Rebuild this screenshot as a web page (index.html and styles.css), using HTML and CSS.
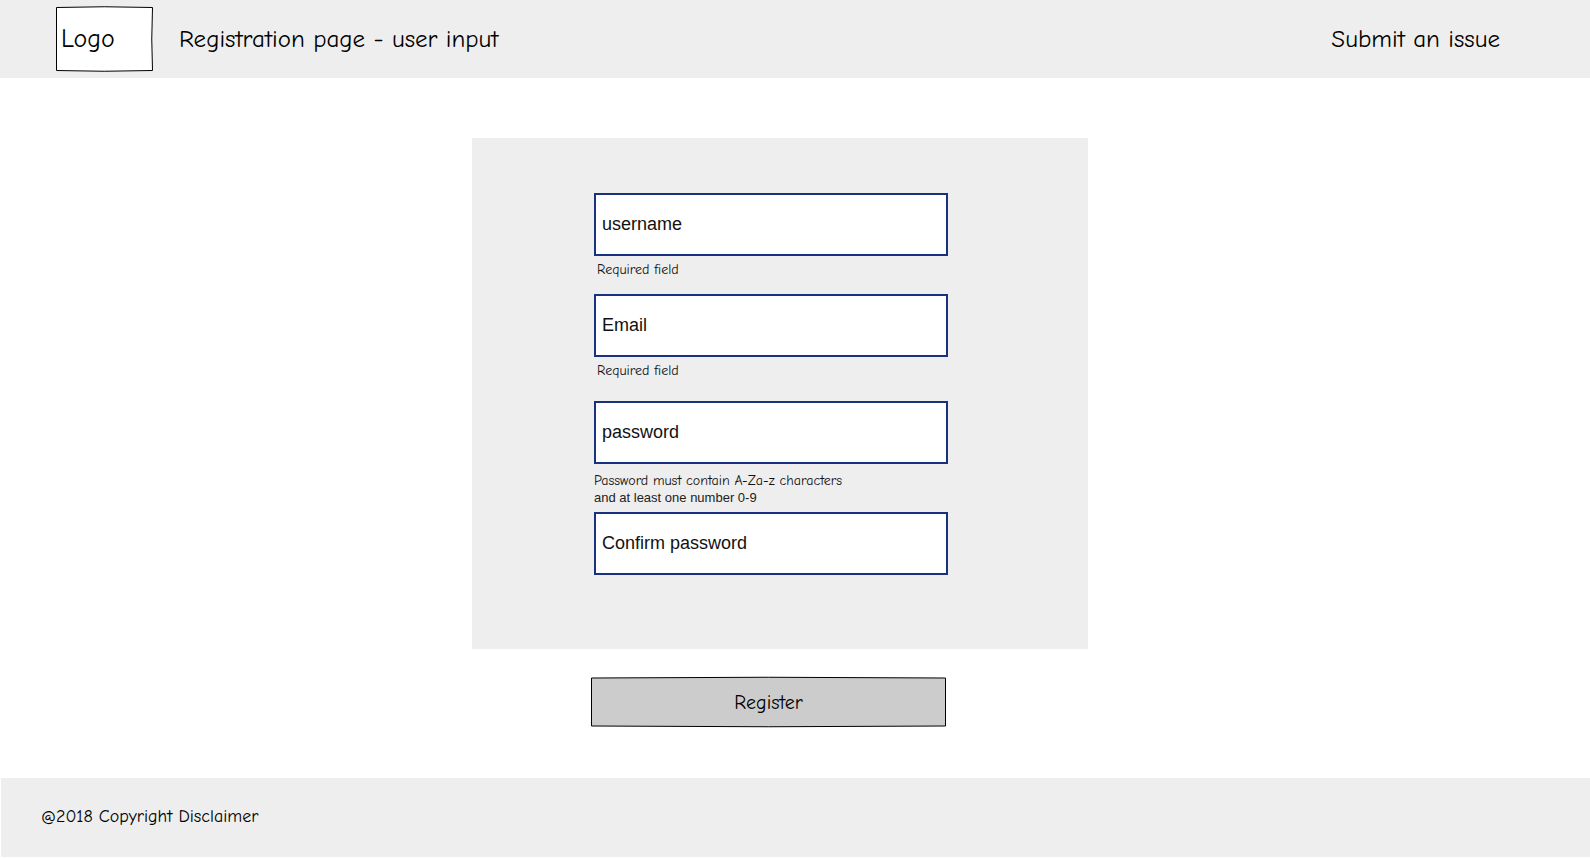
FILE: index.html
```html
<!DOCTYPE html>
<html lang="en">
<head>
<meta charset="utf-8">
<meta name="viewport" content="width=device-width, initial-scale=1">
<title>Registration page</title>
<link rel="stylesheet" href="styles.css">
</head>
<body class="page">
  <header class="header">
    <div class="logo">
      <svg class="sketch" viewBox="0 0 97 64" preserveAspectRatio="none" aria-hidden="true">
        <path class="sketch-paper" d="M.5 .5Q48-1 96.500 .5Q95 32 96.500 63.500Q48 65 .5 63.500Z"/>
      </svg>
      <span class="logo-text">Logo</span>
    </div>
    <h1 class="title">Registration page - user input</h1>
    <a class="issue-link" href="#issue">Submit an issue</a>
  </header>
  <main class="main">
    <form class="form">
      <div class="card">
        <div class="field">
          <input class="input" type="text" placeholder="username" aria-label="username" aria-describedby="username-hint">
          <p class="hint hint-inset" id="username-hint">Required field</p>
        </div>
        <div class="field">
          <input class="input" type="email" placeholder="Email" aria-label="Email" aria-describedby="email-hint">
          <p class="hint hint-inset" id="email-hint">Required field</p>
        </div>
        <div class="field">
          <input class="input" type="password" placeholder="password" aria-label="password" aria-describedby="password-hint">
          <p class="hint" id="password-hint">Password must contain A-Za-z characters<br><span class="hint-plain">and at least one number 0-9</span></p>
        </div>
        <div class="field">
          <input class="input" type="password" placeholder="Confirm password" aria-label="Confirm password">
        </div>
      </div>
      <button class="register" type="submit">
        <svg class="sketch" viewBox="0 0 355 50" preserveAspectRatio="none" aria-hidden="true">
          <path class="sketch-grey" d="M.5 1Q177-.5 354.500 1V49Q177 50.500 .5 49Z"/>
        </svg>
        <span class="register-text">Register</span>
      </button>
    </form>
  </main>
  <footer class="footer">@2018 Copyright Disclaimer</footer>
</body>
</html>
```
FILE: styles.css
```css
* { box-sizing: border-box; }

.page {
  --hand: "Comic Sans MS", "Comic Neue", "Open Sans", sans-serif;
  --sans: Arial, "Liberation Sans", sans-serif;
  margin: 0;
  min-height: 100vh;
  padding-bottom: 2px;
  display: flex;
  flex-direction: column;
  background: #fff;
  color: #000;
  font-family: var(--hand);
}

.header {
  display: flex;
  align-items: center;
  min-height: 78px;
  padding: 0 90px 1px 56px;
  background: #eee;
}

.logo {
  position: relative;
  display: flex;
  align-items: center;
  width: 97px;
  height: 64px;
  padding-left: 5px;
  font-size: 26px;
}

.sketch {
  position: absolute;
  inset: 0;
  width: 100%;
  height: 100%;
  overflow: visible;
}

.sketch-paper,
.sketch-grey {
  fill: #fff;
  stroke: #000;
  stroke-width: 1;
  stroke-linejoin: round;
}

.sketch-grey { fill: #ccc; }

.logo-text,
.register-text { position: relative; }

.title {
  margin: 0 auto 0 26px;
  font-size: 25px;
  font-weight: 400;
}

.issue-link {
  color: inherit;
  font-size: 25px;
  text-decoration: none;
}

.main {
  flex: 1;
  padding: 60px 30px 50px 0;
}

.form {
  display: flex;
  flex-direction: column;
  align-items: center;
  gap: 28px;
}

.card {
  width: 616px;
  max-width: 100%;
  padding: 55px 140px 74px 122px;
  background: #eee;
}

.field + .field { margin-top: 16px; }
.field:nth-child(3) { margin-top: 22px; }
.field:nth-child(4) { margin-top: 6px; }

.input {
  display: block;
  width: 100%;
  height: 63px;
  padding: 0 6px;
  border: 2px solid #183180;
  border-radius: 0;
  background: #fff;
  color: #000;
  font: 18px var(--sans);
}

.input::placeholder {
  color: #111;
  opacity: 1;
}

.hint {
  margin: 0;
  padding-top: 8px;
  color: #111;
  font-size: 14px;
  line-height: 17px;
}

.hint-inset {
  padding-top: 5px;
  padding-left: 3px;
}

.hint-plain {
  color: #222;
  font-family: var(--sans);
  font-size: 13px;
}

.register {
  position: relative;
  width: 355px;
  max-width: 100%;
  height: 50px;
  margin-right: 23px;
  padding: 0;
  border: 0;
  background: none;
  color: #000;
  font: 20px var(--hand);
}

.footer {
  display: flex;
  align-items: center;
  min-height: 79px;
  margin-left: 1px;
  padding: 0 40px 2px;
  background: #eee;
  font-size: 18px;
}
```
